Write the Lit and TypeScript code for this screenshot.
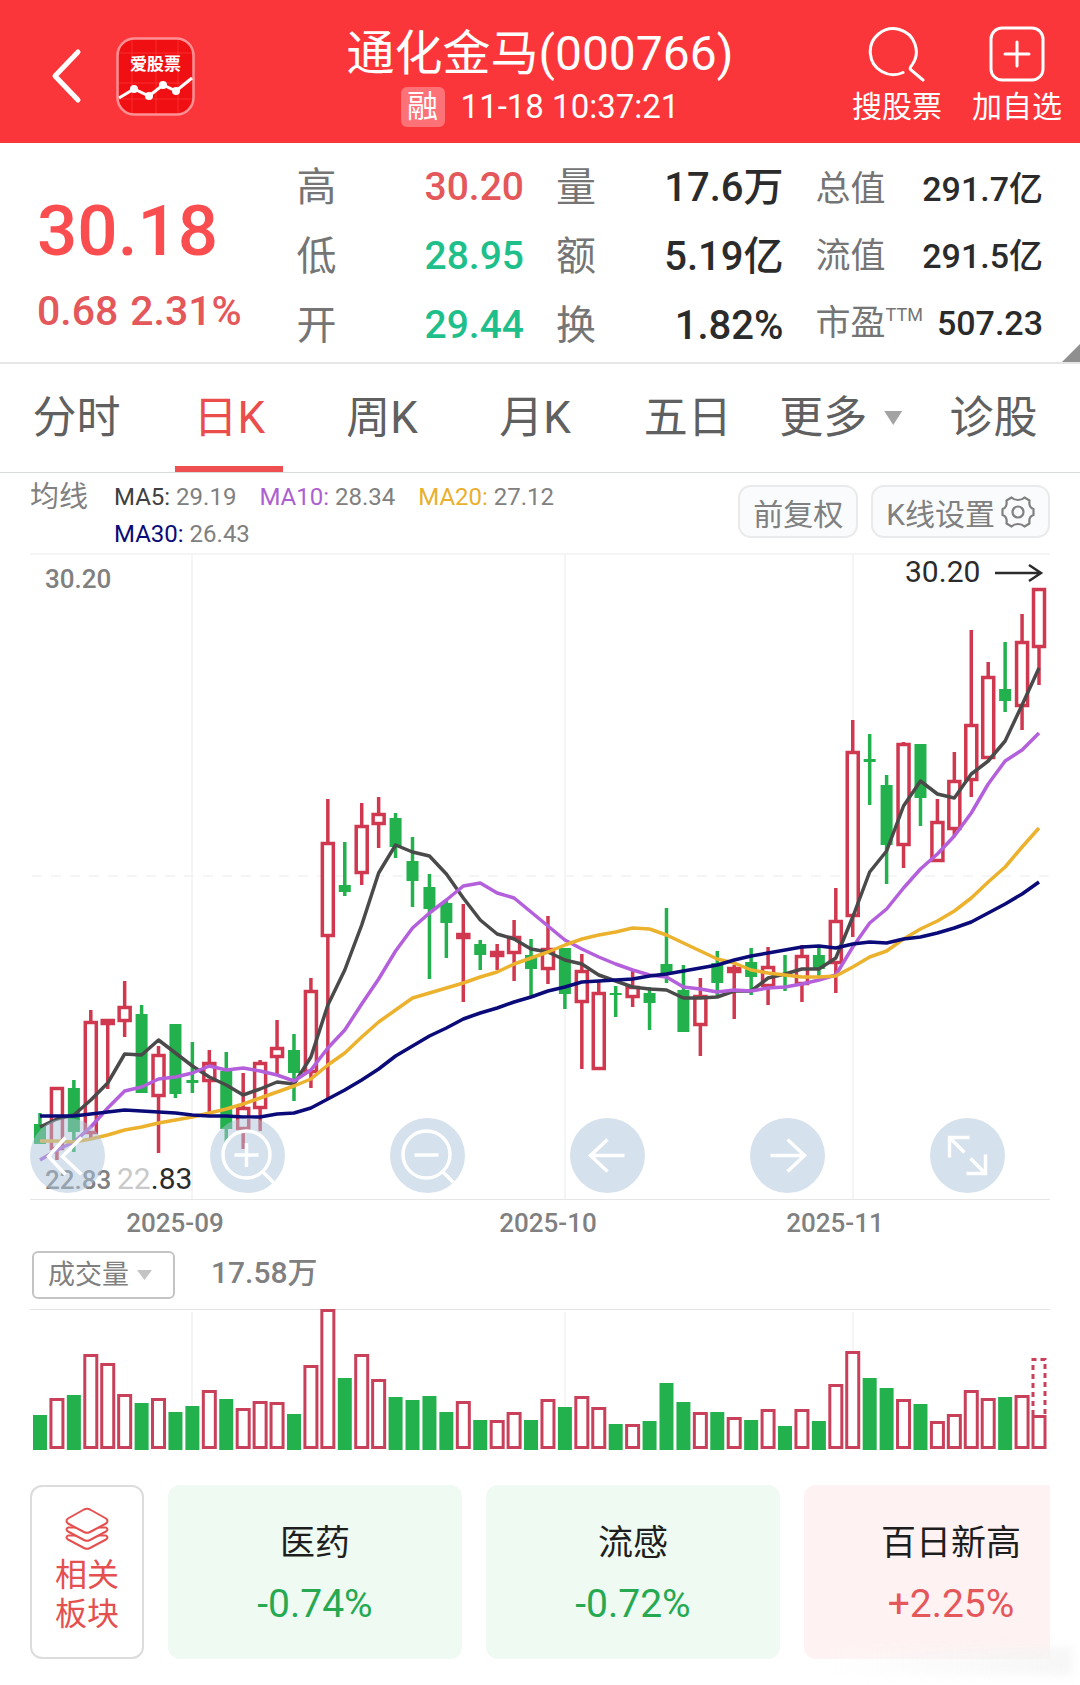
import { LitElement, html, svg, css } from "lit";
import { customElement, property, state } from "lit/decorators.js";

type Tone = "up" | "down";
/** tone, high, body top, body bottom, low, volume top (all on the drawing's y axis) */
type Candle = [Tone, number, number, number, number, number];

const U: Tone = "up";
const D: Tone = "down";

const CANDLES: Candle[] = [
  [D, 1113, 1124, 1144, 1144, 1415],
  [U, 1087, 1087, 1150, 1160, 1398],
  [D, 1080, 1088, 1132, 1152, 1395],
  [U, 1010, 1021, 1134, 1138, 1354],
  [U, 1019, 1019, 1025, 1089, 1363],
  [U, 981, 1006, 1022, 1037, 1394],
  [D, 1005, 1014, 1093, 1093, 1403],
  [U, 1046, 1054, 1097, 1153, 1398],
  [D, 1024, 1024, 1094, 1098, 1412],
  [D, 1042, 1080, 1083, 1093, 1406],
  [U, 1050, 1062, 1082, 1113, 1390],
  [D, 1052, 1071, 1129, 1143, 1399],
  [U, 1073, 1107, 1130, 1149, 1408],
  [U, 1060, 1062, 1109, 1131, 1401],
  [U, 1020, 1047, 1058, 1074, 1402],
  [D, 1034, 1050, 1073, 1101, 1414],
  [U, 978, 990, 1073, 1088, 1365],
  [U, 799, 842, 937, 1098, 1309],
  [D, 842, 885, 892, 896, 1378],
  [U, 803, 825, 874, 885, 1354],
  [U, 797, 813, 825, 848, 1379],
  [D, 813, 818, 847, 858, 1397],
  [D, 837, 861, 881, 907, 1400],
  [D, 874, 887, 909, 979, 1396],
  [D, 900, 903, 923, 958, 1412],
  [U, 904, 933, 939, 1002, 1401],
  [D, 940, 944, 955, 970, 1420],
  [U, 944, 951, 956, 970, 1420],
  [U, 920, 936, 954, 981, 1412],
  [D, 939, 955, 969, 997, 1420],
  [U, 916, 948, 970, 984, 1399],
  [D, 948, 948, 994, 1009, 1407],
  [U, 954, 970, 1003, 1069, 1396],
  [U, 980, 992, 1070, 1070, 1407],
  [D, 986, 993, 995, 1017, 1424],
  [U, 970, 986, 998, 1007, 1424],
  [D, 987, 993, 1003, 1030, 1421],
  [D, 908, 964, 973, 983, 1383],
  [D, 965, 990, 1032, 1032, 1402],
  [U, 978, 995, 1026, 1056, 1412],
  [D, 951, 963, 983, 997, 1412],
  [U, 965, 967, 973, 1019, 1417],
  [D, 948, 962, 977, 995, 1420],
  [U, 947, 966, 987, 1005, 1409],
  [D, 955, 974, 976, 991, 1426],
  [U, 945, 955, 985, 1002, 1409],
  [D, 945, 955, 969, 978, 1421],
  [U, 888, 920, 964, 993, 1384],
  [U, 720, 751, 917, 937, 1351],
  [D, 734, 759, 762, 805, 1378],
  [D, 775, 785, 845, 884, 1388],
  [U, 742, 743, 846, 868, 1399],
  [D, 744, 744, 798, 826, 1404],
  [U, 799, 821, 862, 862, 1421],
  [U, 752, 780, 830, 836, 1414],
  [U, 630, 724, 781, 797, 1390],
  [U, 662, 676, 759, 759, 1398],
  [D, 642, 689, 701, 712, 1397],
  [U, 614, 641, 707, 730, 1395],
  [U, 588, 588, 648, 685, 1415],
];

const AVERAGES: { name: string; value: string; tone: string; points: number[] }[] = [
  {
    name: "MA5", value: "29.19", tone: "ma5",
    points: [1127, 1119, 1115, 1100, 1083, 1054, 1055, 1040, 1053, 1066, 1077, 1085, 1095, 1089, 1082, 1084, 1057, 1005, 970, 925,
      873, 845, 852, 856, 874, 898, 920, 934, 939, 949, 952, 960, 964, 975, 981, 987, 989, 990, 998, 998,
      997, 991, 991, 978, 974, 969, 969, 958, 917, 872, 851, 806, 781, 794, 798, 774, 761, 741, 705, 668],
  },
  {
    name: "MA10", value: "28.34", tone: "ma10",
    points: [1160, 1150, 1142, 1127, 1108, 1091, 1087, 1079, 1077, 1073, 1066, 1070, 1068, 1071, 1075, 1081, 1070, 1048, 1030, 1004,
      979, 951, 928, 913, 900, 886, 883, 893, 898, 912, 926, 940, 949, 957, 964, 970, 975, 977, 987, 989,
      992, 990, 991, 988, 987, 984, 980, 975, 947, 923, 909, 888, 869, 854, 836, 813, 784, 761, 750, 733],
  },
  {
    name: "MA20", value: "27.12", tone: "ma20",
    points: [1141, 1141, 1142, 1139, 1135, 1130, 1127, 1123, 1120, 1117, 1113, 1109, 1104, 1098, 1092, 1086, 1079, 1065, 1053, 1037,
      1022, 1010, 998, 993, 988, 983, 977, 972, 964, 958, 952, 945, 939, 935, 932, 928, 929, 935, 943, 951,
      959, 963, 970, 973, 975, 977, 977, 976, 967, 957, 951, 939, 929, 921, 911, 898, 882, 867, 847, 828],
  },
  {
    name: "MA30", value: "26.43", tone: "ma30",
    points: [1116, 1116, 1116, 1114, 1112, 1110, 1111, 1112, 1113, 1115, 1116, 1116, 1117, 1117, 1114, 1113, 1108, 1099, 1090, 1080,
      1069, 1056, 1046, 1036, 1028, 1019, 1013, 1008, 1002, 997, 991, 987, 982, 981, 980, 979, 976, 974, 971, 968,
      965, 960, 956, 953, 950, 947, 946, 948, 944, 942, 943, 939, 937, 933, 928, 922, 913, 904, 894, 882],
  },
];

const MONTHS = [
  { x: 192, textX: 175, label: "2025-09" },
  { x: 565, textX: 548, label: "2025-10" },
  { x: 853, textX: 835, label: "2025-11" },
];

const xAt = (i: number) => 40 + (i * 999) / 59;

@customElement("stock-header")
export class StockHeader extends LitElement {
  static styles = css`
    :host {
      display: grid;
      grid-template-columns: 1fr auto 1fr;
      align-items: center;
      padding: 25px 18px 16px;
      background: #fb363b;
      color: #fff;
    }
    button {
      font: inherit;
      color: inherit;
      background: none;
      border: 0;
      padding: 0;
      cursor: pointer;
    }
    svg { display: block; fill: none; }
    .left { display: flex; align-items: center; gap: 28px; padding-left: 26px; }
    .logo { color: #fff; }
    .logo text { font: 700 17px "Noto Sans CJK SC", sans-serif; fill: #fff; }
    .middle { display: flex; flex-direction: column; align-items: center; gap: 4px; }
    h1 { margin: 0; font-size: 48px; line-height: 58px; font-weight: 400; white-space: nowrap; }
    .sub { display: flex; align-items: center; gap: 16px; font-size: 33px; line-height: 40px; white-space: nowrap; }
    .badge {
      width: 44px;
      border-radius: 6px;
      background: rgba(255, 255, 255, 0.3);
      text-align: center;
      font-size: 31px;
    }
    .right { display: flex; justify-content: flex-end; gap: 30px; }
    .action {
      display: flex;
      flex-direction: column;
      align-items: center;
      gap: 4px;
      font-size: 30px;
      line-height: 40px;
      white-space: nowrap;
    }
  `;

  render() {
    return html`
      <div class="left">
        <button aria-label="返回">
          <svg width="44" height="64" viewBox="0 0 44 64"><path d="M34 8 11 32l23 24" stroke="#fff" stroke-width="5" stroke-linecap="round" stroke-linejoin="round"/></svg>
        </button>
        <svg class="logo" width="79" height="79" viewBox="0 0 79 79" role="img" aria-label="爱股票">
          <rect x="1.5" y="1.5" width="76" height="76" rx="17" fill="#f01013" stroke="#ff9094" stroke-width="2.5"/>
          <path d="M16 3v73M40 3v73M62 3v73M3 16h73M3 46h73M3 62h73" stroke="#ff4a4c" stroke-width="1" opacity=".5"/>
          <text x="39.500" y="33" text-anchor="middle">爱股票</text>
          <path d="M3 61 18 52 33 59 47 48 60 54 76 41" stroke="#fff" stroke-width="3"/>
          <g fill="#fff"><circle cx="18" cy="52" r="4"/><circle cx="33" cy="59" r="4"/><circle cx="47" cy="48" r="4"/><circle cx="60" cy="54" r="4"/></g>
        </svg>
      </div>
      <div class="middle">
        <h1>通化金马(000766)</h1>
        <div class="sub"><span class="badge">融</span><span>11-18 10:37:21</span></div>
      </div>
      <div class="right">
        <button class="action">
          <svg width="58" height="58" viewBox="0 0 58 58" stroke="#fff" stroke-width="3" stroke-linecap="round">
            <path d="M35 47.500A23 23 0 1 1 44 40Q41 43 43 45L55 55"/>
          </svg>
          搜股票
        </button>
        <button class="action">
          <svg width="58" height="58" viewBox="0 0 58 58" stroke="#fff" stroke-width="3" stroke-linecap="round">
            <rect x="3" y="3" width="52" height="52" rx="11"/><path d="M29 17v24M17 29h24"/>
          </svg>
          加自选
        </button>
      </div>
    `;
  }
}

@customElement("stock-quote")
export class StockQuote extends LitElement {
  static styles = css`
    :host {
      position: relative;
      display: grid;
      grid-template-columns: repeat(4, minmax(0, 1fr));
      column-gap: 32px;
      align-items: center;
      padding: 10px 37px 2px;
      border-bottom: 2px solid #e6e6e6;
      color: #2b2b2b;
      white-space: nowrap;
    }
    .price { padding-top: 20px; color: #fa4d4f; }
    .last { font-size: 71px; line-height: 88px; font-weight: 500; }
    .change { display: flex; gap: 12px; font-size: 41px; line-height: 72px; font-weight: 500; color: #e4575a; }
    dl { margin: 0; }
    .row {
      display: flex;
      justify-content: space-between;
      align-items: center;
      font-size: 40px;
      line-height: 69px;
    }
    .small .row { font-size: 35px; line-height: 67px; }
    dt { color: #757575; }
    dd { margin: 0; font-weight: 500; }
    .small dd { font-size: 34px; }
    sup { font-size: 18px; line-height: 18px; vertical-align: 14px; }
    .up, .down { font-size: 39px; }
    .up { color: #e4575a; }
    .down { color: #1fbf8b; }
    .corner {
      position: absolute;
      right: 0;
      bottom: 0;
      width: 18px;
      height: 18px;
      background: #8f8f8f;
      clip-path: polygon(100% 0, 100% 100%, 0 100%);
    }
  `;

  private column(rows: [unknown, string, string][], size = "") {
    return html`<dl class=${size}>
      ${rows.map(([k, v, tone]) => html`<div class="row"><dt>${k}</dt><dd class=${tone}>${v}</dd></div>`)}
    </dl>`;
  }

  render() {
    return html`
      <div class="price">
        <div class="last">30.18</div>
        <div class="change"><span>0.68</span><span>2.31%</span></div>
      </div>
      ${this.column([["高", "30.20", "up"], ["低", "28.95", "down"], ["开", "29.44", "down"]])}
      ${this.column([["量", "17.6万", ""], ["额", "5.19亿", ""], ["换", "1.82%", ""]])}
      ${this.column([["总值", "291.7亿", ""], ["流值", "291.5亿", ""], [html`市盈<sup>TTM</sup>`, "507.23", ""]], "small")}
      <span class="corner"></span>
    `;
  }
}

@customElement("period-tabs")
export class PeriodTabs extends LitElement {
  static styles = css`
    :host { display: block; border-bottom: 1px solid #d6dbdb; }
    nav { display: grid; grid-template-columns: repeat(7, minmax(0, 1fr)); padding-right: 10px; }
    button {
      display: flex;
      flex-direction: column;
      align-items: center;
      padding: 6px 0 0;
      border: 0;
      background: none;
      font: inherit;
      font-size: 44px;
      line-height: 96px;
      color: #606060;
      white-space: nowrap;
      cursor: pointer;
    }
    button::after { content: ""; width: 108px; height: 6px; }
    .on { color: #ea4d4c; }
    .on::after { background: #ee4f50; }
    .label { display: flex; align-items: center; gap: 17px; }
    .tri { width: 18px; height: 14px; background: #a3a3a3; clip-path: polygon(0 0, 100% 0, 50% 100%); }
  `;

  @state() private active = "日K";

  render() {
    return html`<nav>
      ${["分时", "日K", "周K", "月K", "五日", "更多", "诊股"].map(
        (t) => html`<button class=${t === this.active ? "on" : ""} @click=${() => (this.active = t)}>
          <span class="label">${t}${t === "更多" ? html`<i class="tri"></i>` : ""}</span>
        </button>`,
      )}
    </nav>`;
  }
}

@customElement("average-legend")
export class AverageLegend extends LitElement {
  static styles = css`
    :host {
      display: flex;
      align-items: flex-start;
      padding: 6px 30px 0;
      color: #808080;
      white-space: nowrap;
    }
    .name { font-size: 29px; line-height: 37px; margin-right: 26px; }
    .items {
      flex: 1;
      display: flex;
      flex-wrap: wrap;
      column-gap: 23px;
      margin-right: 80px;
      font-size: 24px;
      line-height: 37px;
    }
    .ma5 { color: #404040; }
    .ma10 { color: #ad5fd2; }
    .ma20 { color: #e9b02e; }
    .ma30 { color: #0a0a78; }
    .tools { display: flex; gap: 13px; padding-top: 6px; }
    button {
      display: flex;
      align-items: center;
      gap: 6px;
      height: 53px;
      padding: 0 13px;
      border: 2px solid #e8eaec;
      border-radius: 13px;
      background: #fafbfd;
      font: inherit;
      font-size: 30px;
      color: #808080;
      cursor: pointer;
    }
  `;

  render() {
    return html`
      <span class="name">均线</span>
      <div class="items">
        ${AVERAGES.map((a) => html`<span><span class=${a.tone}>${a.name}:</span> ${a.value}</span>`)}
      </div>
      <div class="tools">
        <button>前复权</button>
        <button>
          K线设置
          <svg width="34" height="34" viewBox="0 0 34 34" fill="none" stroke="#808080" stroke-width="2.2" stroke-linejoin="round">
            <path d="M10.500 2.500Q13 5 17 5T23.500 2.500L28.500 5.500Q27.500 12.500 32.500 14V20Q27.500 21.500 28.500 28.500L23.500 31.500Q21 29 17 29T10.500 31.500L5.500 28.500Q6.500 21.500 1.500 20V14Q6.500 12.500 5.500 5.500Z"/>
            <circle cx="17" cy="17" r="5.500"/>
          </svg>
        </button>
      </div>
    `;
  }
}

@customElement("candle-chart")
export class CandleChart extends LitElement {
  static styles = css`
    :host { position: relative; display: block; margin: 0 30px; }
    .plot { display: block; width: 100%; height: auto; }
    .grid { stroke: #f5f5f5; stroke-width: 2; }
    .mid { stroke: #f5f5f5; stroke-width: 2; stroke-dasharray: 10 9; }
    .edge { stroke: #e6e6e6; stroke-width: 1; }
    .up { stroke: #d0384f; stroke-width: 3.5; fill: #fff; }
    .down { stroke: #22b14c; stroke-width: 3.5; fill: #22b14c; }
    .fill { stroke: none; }
    .line { fill: none; stroke-width: 3.5; stroke-linejoin: round; }
    .ma5 { stroke: #4a4a4a; }
    .ma10 { stroke: #b45fdc; }
    .ma20 { stroke: #ecb22e; }
    .ma30 { stroke: #0a0a78; }
    .axis { font-size: 26px; font-weight: 500; fill: #808080; }
    .middle { text-anchor: middle; }
    .mark { font-size: 30px; fill: #2b2b2b; }
    .faded { fill: #c9c9c9; }
    .arrow { fill: none; stroke: #2b2b2b; stroke-width: 2.5; }
    .tools {
      position: absolute;
      left: 0;
      right: 45px;
      bottom: 52px;
      display: flex;
      justify-content: space-between;
    }
    .tools button {
      width: 75px;
      height: 75px;
      padding: 0;
      border: 0;
      border-radius: 50%;
      background: rgba(171, 195, 217, 0.5);
      cursor: pointer;
    }
    .tools svg { display: block; fill: none; stroke: #fff; stroke-width: 3.5; }
  `;

  private candle([tone, high, top, bottom, low]: Candle, i: number) {
    const x = xAt(i);
    const wick = svg`<path class=${tone} d="M${x} ${high}V${top}M${x} ${bottom}V${low}"/>`;
    if (tone === "down") {
      return svg`${wick}<rect class="down fill" x=${x - 6} y=${top} width="12" height=${bottom - top}/>`;
    }
    const h = Math.max(bottom - top - 3, 3);
    return svg`${wick}<rect class="up" x=${x - 5.5} y=${top + 1.5} width="11" height=${h}/>`;
  }

  private tool(label: string, shape: unknown) {
    return html`<button aria-label=${label}>
      <svg width="75" height="75" viewBox="-37.5 -37.5 75 75">${shape}</svg>
    </button>`;
  }

  render() {
    return html`
      <svg class="plot" viewBox="30 553 1020 692" role="img" aria-label="日K">
        <path class="grid" d="M30 554H1050"/>
        ${MONTHS.map((m) => svg`<path class="grid" d="M${m.x} 553V1199"/>`)}
        <path class="mid" d="M32 876H1050"/>
        <path class="edge" d="M30 1199.500H1050"/>
        ${CANDLES.map((c, i) => this.candle(c, i))}
        ${AVERAGES.map(
          (a) => svg`<polyline class="line ${a.tone}" points=${a.points.map((y, i) => `${xAt(i)},${y}`).join(" ")}/>`,
        )}
        <text class="axis" x="45" y="588">30.20</text>
        <text class="axis" x="45" y="1189">22.83</text>
        <text class="mark" x="117" y="1189"><tspan class="faded">22</tspan>.83</text>
        <text class="mark" x="905" y="582">30.20</text>
        <path class="arrow" d="M995 573H1041M1029 565l12 8-12 8"/>
        ${MONTHS.map((m) => svg`<text class="axis middle" x=${m.textX} y="1232">${m.label}</text>`)}
      </svg>
      <div class="tools">
        ${this.tool("快退", svg`<path d="M-2-18-19 1-2 19M14-18-5 1 14 19"/>`)}
        ${this.tool("放大", svg`<circle cx="-1" cy="-1" r="23.500"/><path d="M-1-12.500v24M-13-.5h24M15 16l11 11"/>`)}
        ${this.tool("缩小", svg`<circle cx="-1" cy="-1" r="23.500"/><path d="M-13-.5h24M15 16l11 11"/>`)}
        ${this.tool("左移", svg`<path d="M17 0H-16M0-16-17 0 0 16"/>`)}
        ${this.tool("右移", svg`<path d="M-17 0H16M0-16 17 0 0 16"/>`)}
        ${this.tool("全屏", svg`<path d="M-18 2V-18H2M-18-18-3-3M18-1V18H-1M18 18 3 3"/>`)}
      </div>
    `;
  }
}

@customElement("volume-chart")
export class VolumeChart extends LitElement {
  static styles = css`
    :host { display: block; margin: 6px 30px 0; }
    .head { display: flex; align-items: flex-start; gap: 36px; padding: 0 2px 9px; }
    .picker {
      position: relative;
      display: flex;
      align-items: center;
    }
    select {
      appearance: none;
      width: 143px;
      height: 48px;
      padding: 0 14px;
      border: 2px solid #c4c4c4;
      border-radius: 6px;
      background: #fff;
      font: inherit;
      font-size: 27px;
      color: #808080;
    }
    .tri {
      position: absolute;
      right: 23px;
      width: 15px;
      height: 10px;
      background: #c4c4c4;
      clip-path: polygon(0 0, 100% 0, 50% 100%);
      pointer-events: none;
    }
    .total { font-size: 30px; line-height: 44px; font-weight: 500; color: #808080; }
    .plot { display: block; width: 100%; height: auto; }
    .grid { stroke: #f5f5f5; stroke-width: 2; }
    .edge { stroke: #e2e2e2; stroke-width: 1; }
    .up { stroke: #c8405a; stroke-width: 3; fill: #fff; }
    .down { fill: #22b14c; }
    .estimate { stroke: #c8405a; stroke-width: 3; fill: none; stroke-dasharray: 5 4; }
  `;

  render() {
    return html`
      <div class="head">
        <label class="picker">
          <select aria-label="指标"><option>成交量</option></select>
          <i class="tri"></i>
        </label>
        <span class="total">17.58万</span>
      </div>
      <svg class="plot" viewBox="30 1308 1020 143" role="img" aria-label="成交量">
        <path class="edge" d="M30 1309.500H1050"/>
        ${MONTHS.map((m) => svg`<path class="grid" d="M${m.x} 1312V1448"/>`)}
        ${CANDLES.map(([tone, , , , , top], i) =>
          tone === "up"
            ? svg`<rect class="up" x=${xAt(i) - 6} y=${top + 1.5} width="12" height=${1446 - top}/>`
            : svg`<rect class="down" x=${xAt(i) - 7} y=${top} width="14" height=${1450 - top}/>`,
        )}
        <path class="estimate" d="M1033 1415V1359.500H1045V1415"/>
      </svg>
    `;
  }
}

@customElement("sector-strip")
export class SectorStrip extends LitElement {
  static styles = css`
    :host {
      position: relative;
      display: flex;
      gap: 24px;
      padding: 34px 30px 24px;
    }
    a { box-sizing: border-box; color: inherit; text-decoration: none; }
    .related {
      flex: none;
      width: 114px;
      height: 174px;
      display: flex;
      flex-direction: column;
      align-items: center;
      justify-content: center;
      padding-bottom: 4px;
      border: 2px solid #dcdcdc;
      border-radius: 12px;
      color: #e4504f;
      font-size: 32px;
      line-height: 39px;
    }
    .related svg { display: block; margin-bottom: 5px; fill: #fff; stroke: #e4504f; stroke-width: 2; stroke-linejoin: round; }
    .cards { flex: 1; min-width: 0; display: flex; gap: 24px; overflow: hidden; }
    .card {
      flex: none;
      width: 294px;
      height: 174px;
      display: flex;
      flex-direction: column;
      align-items: center;
      justify-content: center;
      gap: 8px;
      padding-top: 3px;
      border-radius: 12px;
      font-size: 35px;
      line-height: 52px;
      color: #1e1e1e;
    }
    .card.down { background: #eefaf2; }
    .card.up { background: #fff2f2; }
    .rate { font-size: 39px; }
    .down .rate { color: #26a951; }
    .up .rate { color: #e4575a; }
    .haze {
      position: absolute;
      right: 8px;
      bottom: 8px;
      width: 240px;
      height: 28px;
      background: linear-gradient(90deg, rgba(255, 255, 255, 0.2), rgba(244, 244, 244, 0.8));
      filter: blur(4px);
      pointer-events: none;
    }
  `;

  @property({ attribute: false }) sectors = [
    { name: "医药", rate: "-0.74%" },
    { name: "流感", rate: "-0.72%" },
    { name: "百日新高", rate: "+2.25%" },
  ];

  render() {
    return html`
      <a class="related" href="#sectors">
        <svg width="46" height="44" viewBox="0 0 46 44">
          <path d="M4 28.500Q1 30.500 4 32.500L20 41Q23 42.500 26 41L42 32.500Q45 30.500 42 28.500Z"/>
          <path d="M4 20.500Q1 22.500 4 24.500L20 33Q23 34.500 26 33L42 24.500Q45 22.500 42 20.500Z"/>
          <path d="M20 2.500Q23 1 26 2.500L42 11.500Q45 14 42 16.500L26 25Q23 26.500 20 25L4 16.500Q1 14 4 11.500Z"/>
        </svg>
        <span>相关</span><span>板块</span>
      </a>
      <div class="cards">
        ${this.sectors.map(
          (s) => html`<a class="card ${s.rate.startsWith("-") ? "down" : "up"}" href="#sector">
            <span>${s.name}</span><span class="rate">${s.rate}</span>
          </a>`,
        )}
      </div>
      <span class="haze"></span>
    `;
  }
}

@customElement("app-root")
export class AppRoot extends LitElement {
  static styles = css`
    :host {
      display: flex;
      flex-direction: column;
      min-height: 100vh;
      background: #fff;
      font-family: Roboto, "Noto Sans CJK SC", sans-serif;
    }
  `;

  render() {
    return html`
      <stock-header></stock-header>
      <stock-quote></stock-quote>
      <period-tabs></period-tabs>
      <average-legend></average-legend>
      <candle-chart></candle-chart>
      <volume-chart></volume-chart>
      <sector-strip></sector-strip>
    `;
  }
}
